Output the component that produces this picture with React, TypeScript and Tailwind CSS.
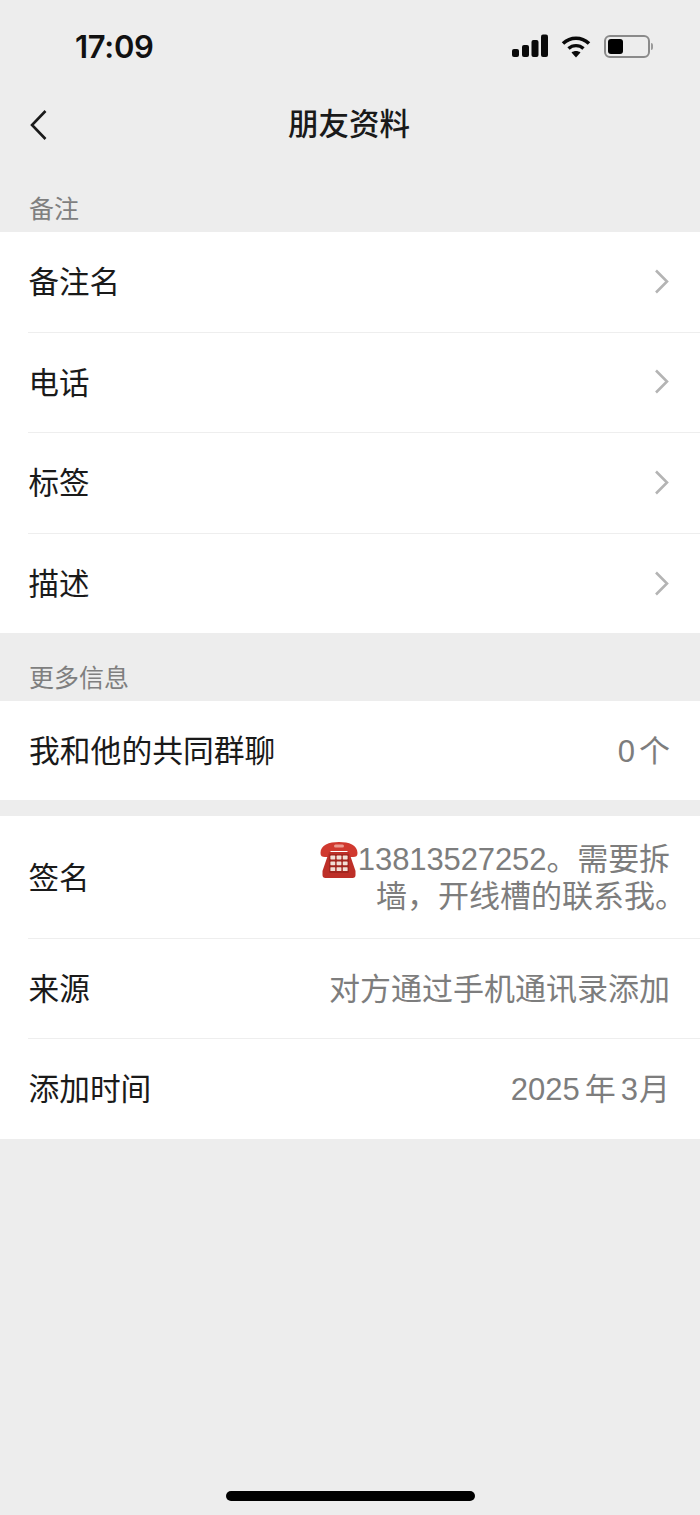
const latinCjk = "font-['Liberation_Sans','Noto_Sans_CJK_SC',sans-serif]";

function Chevron() {
  return (
    <svg width="16" height="28" viewBox="0 0 16 28" fill="none" className="shrink-0 translate-x-px">
      <path d="M3 2.5 L14 13.5 L3 24.5" stroke="#b4b4b4" strokeWidth="2.6" />
    </svg>
  );
}

function Row({ title, border = true }: { title: string; border?: boolean }) {
  return (
    <div className="pl-7 h-[100.5px]">
      <div className={`h-full flex items-center justify-between pr-[32px] ${border ? "border-b border-[#eeeeee]" : ""}`}>
        <span className="text-[30.5px] text-[#1a1a1a] pl-[0.5px] pt-[3px]">{title}</span>
        <Chevron />
      </div>
    </div>
  );
}

function InfoRow({ title, children, border = true }: { title: string; children: React.ReactNode; border?: boolean }) {
  return (
    <div className="pl-7 h-[100px]">
      <div className={`h-full flex items-center justify-between pr-[30px] ${border ? "border-b border-[#eeeeee]" : ""}`}>
        <span className="text-[30.7px] text-[#1a1a1a] pl-[0.5px] pt-[3px]">{title}</span>
        <span className="text-[31px] text-[#7d7d7d] pt-[3px]">{children}</span>
      </div>
    </div>
  );
}

function PhoneEmoji() {
  return (
    <svg width="38" height="38" viewBox="0 0 38 38" className="shrink-0">
      <path d="M0.5 12 C0.5 4 9 1 19 1 C29 1 37.5 4 37.5 12 C37.5 15 36 16 33 16 L29 16 C27.5 16 27.5 15 27.5 13 L27.5 10 L10.5 10 L10.5 13 C10.5 15 10.5 16 9 16 L5 16 C2 16 0.5 15 0.5 12 Z" fill="#d0392f" />
      <path d="M9 11 L29 11 L35.5 30 L35.5 34 C35.5 36 34.5 37 32.5 37 L5.5 37 C3.5 37 2.5 36 2.5 34 L2.5 30 Z" fill="#bd2f28" />
      <rect x="14" y="3.5" width="10" height="3" rx="1.5" fill="#eb9a8f" />
      <rect x="9" y="13" width="20" height="19" rx="1.5" fill="#a3261f" />
      {[0, 1, 2].map((r) =>
        [0, 1, 2].map((c) => (
          <rect key={`${r}-${c}`} x={10.4 + c * 6.2} y={14.6 + r * 5.8} width="4.8" height="3.8" rx="0.6" fill="#f2dfd6" />
        ))
      )}
    </svg>
  );
}

export default function App() {
  return (
    <div className={`w-[700px] h-[1515px] bg-[#ededed] flex flex-col relative overflow-hidden ${latinCjk}`}>
      {/* status bar */}
      <div className="h-[92px] flex items-center justify-between pl-[75px] pr-[47px] pt-[2px]">
        <span className="font-['Inter'] text-[31px] font-semibold text-[#111111] tracking-[-0.3px]">17:09</span>
        <div className="flex items-center gap-[13px] -mt-[2px]">
          <svg width="36" height="24" viewBox="0 0 36 24">
            <rect x="0" y="15" width="7" height="8" rx="2" fill="#0a0a0a" />
            <rect x="10" y="11" width="7" height="12" rx="2" fill="#0a0a0a" />
            <rect x="19.5" y="6" width="7" height="17" rx="2" fill="#0a0a0a" />
            <rect x="29" y="0.5" width="7" height="22.5" rx="2" fill="#0a0a0a" />
          </svg>
          <svg width="30" height="23" viewBox="0 0 30 23" fill="none">
            <path d="M2 8.5 C9.5 1.5 20.5 1.5 28 8.5" stroke="#0a0a0a" strokeWidth="3.6" />
            <path d="M7.5 13.5 C11.8 9.6 18.2 9.6 22.5 13.5" stroke="#0a0a0a" strokeWidth="3.4" />
            <path d="M15 22.5 L10.5 17.6 C13 15.6 17 15.6 19.5 17.6 Z" fill="#0a0a0a" />
          </svg>
          <div className="flex items-center gap-[1px]">
            <div className="w-[46px] h-[23px] rounded-[6px] border-2 border-[#8a8a8a] p-[2px] flex">
              <div className="w-[15px] h-full rounded-[3px] bg-black" />
            </div>
            <div className="w-[2px] h-[7px] rounded-r-sm bg-[#9a9a9a]" />
          </div>
        </div>
      </div>

      {/* nav bar */}
      <div className="h-[66px] flex items-center relative shrink-0">
        <svg width="20" height="32" viewBox="0 0 20 32" fill="none" className="ml-[29px] -mt-[1px]">
          <path d="M16.5 2 L3 16 L16.5 30" stroke="#1a1a1a" strokeWidth="2.6" />
        </svg>
        <span className="absolute left-0 right-[2px] text-center text-[30.5px] font-medium text-[#1a1a1a]">朋友资料</span>
      </div>

      {/* 备注 */}
      <div className="h-[74px] shrink-0 flex items-end pl-[29px] pb-[5px]">
        <span className="text-[25px] text-[#7f7f7f] leading-[36px]">备注</span>
      </div>
      <div className="bg-white h-[401px] shrink-0">
        <Row title="备注名" />
        <Row title="电话" />
        <Row title="标签" />
        <Row title="描述" border={false} />
      </div>

      {/* 更多信息 */}
      <div className="h-[68px] shrink-0 flex items-end pl-[29px] pb-[5px]">
        <span className="text-[25px] text-[#7f7f7f] leading-[36px]">更多信息</span>
      </div>
      <div className="bg-white h-[99px] shrink-0 pl-[29px] pr-[30px] flex items-center justify-between">
        <span className="text-[30.8px] text-[#1a1a1a] pt-[3px]">我和他的共同群聊</span>
        <span className="text-[31px] text-[#7d7d7d] pt-[3px]">0<span className="ml-[4px]">个</span></span>
      </div>

      {/* 签名 / 来源 / 添加时间 */}
      <div className="bg-white mt-[16px] shrink-0">
        <div className="pl-7 h-[123px]">
          <div className="h-full flex items-center justify-between pr-[30px] border-b border-[#eeeeee]">
            <span className="text-[30.5px] text-[#1a1a1a] pl-[0.5px] pt-[3px]">签名</span>
            <div className="flex flex-col items-end text-[31px] leading-[38px] text-[#7d7d7d] mt-[2px]">
              <div className="flex items-center">
                <PhoneEmoji />
                <span className="tracking-[-0.1px]">13813527252。需要拆</span>
              </div>
              <span className="-mr-[16px] -mt-px">墙，开线槽的联系我。</span>
            </div>
          </div>
        </div>
        <InfoRow title="来源">对方通过手机通讯录添加</InfoRow>
        <InfoRow title="添加时间" border={false}>
          2025<span className="mx-[5px]">年</span>3<span className="ml-[1px]">月</span>
        </InfoRow>
      </div>

      {/* home indicator */}
      <div className="absolute left-[226px] top-[1491px] w-[249px] h-[10px] rounded-full bg-black" />
    </div>
  );
}
